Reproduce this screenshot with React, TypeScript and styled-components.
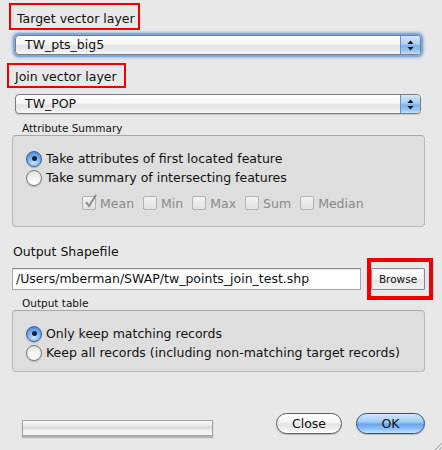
import React from 'react';
import styled, { createGlobalStyle } from 'styled-components';

const GlobalStyle = createGlobalStyle`
	html, body {
		margin: 0;
		padding: 0;
		background: #e8e8e8;
	}
	body {
		font-family: 'DejaVu Sans', 'Liberation Sans', sans-serif;
		font-size: 12.5px;
		color: #111;
	}
`;

const Dialog = styled.div`
	position: relative;
	width: 442px;
	height: 450px;
	box-sizing: border-box;
	padding: 3px 17px 0 12px;
	display: flex;
	flex-direction: column;
	overflow: hidden;
`;

const MarkedLabel = styled.div<{ $top: number; $left: number; $width: number; $padTop: number }>`
	align-self: flex-start;
	box-sizing: border-box;
	width: ${(p) => p.$width}px;
	margin-top: ${(p) => p.$top}px;
	margin-left: ${(p) => p.$left}px;
	padding: ${(p) => p.$padTop}px 0 2px 6px;
	border: 2px solid #f00000;
	line-height: 15px;
	white-space: nowrap;
`;

const Combo = styled.div<{ $focused?: boolean; $top: number }>`
	margin: ${(p) => p.$top}px 4px 0 3px;
	height: 20px;
	box-sizing: border-box;
	border: 1px solid #7d7d7d;
	border-radius: 4px;
	display: flex;
	overflow: hidden;
	background: linear-gradient(#ffffff 0%, #f6f6f6 45%, #e3e3e3 55%, #ececec 80%, #f8f8f8 100%);
	box-shadow: ${(p) => (p.$focused ? '0 0 1px 2px #7fa8dc, 0 0 3px 3px rgba(120,160,220,0.6)' : '0 1px 1px rgba(0,0,0,0.15)')};
`;

const ComboText = styled.div`
	flex: 1;
	padding-left: 9px;
	line-height: 18px;
	white-space: nowrap;
`;

const ComboArrows = styled.div`
	width: 19px;
	border-left: 1px solid #6f8fb8;
	display: flex;
	align-items: center;
	justify-content: center;
	background: linear-gradient(#d5e7fb 0%, #a9cdf4 45%, #7cb2ec 55%, #9cc9f6 85%, #c5e2fc 100%);
`;

const Caption = styled.div<{ $top: number }>`
	margin: ${(p) => p.$top}px 0 0 10px;
	font-size: 10.5px;
	line-height: 13px;
`;

const Group = styled.div<{ $padTop: number; $padBottom: number }>`
	box-sizing: border-box;
	border: 1px solid #b9b9b9;
	border-top-color: #a9a9a9;
	border-radius: 4px;
	background: #dedede;
	padding: ${(p) => p.$padTop}px 0 ${(p) => p.$padBottom}px 13px;
	display: flex;
	flex-direction: column;
`;

const RadioRow = styled.label`
	display: flex;
	align-items: center;
	height: 19px;
	gap: 4px;
	white-space: nowrap;
`;

const RadioDot = styled.span<{ $on?: boolean }>`
	width: 16px;
	height: 16px;
	box-sizing: border-box;
	border-radius: 50%;
	border: 1px solid ${(p) => (p.$on ? '#3d5f90' : '#7a7a7a')};
	display: flex;
	align-items: center;
	justify-content: center;
	background: ${(p) =>
		p.$on
			? 'radial-gradient(circle at 50% 75%, #c6e6ff 0%, #7fb5ee 45%, #4f8bd8 80%)'
			: 'radial-gradient(circle at 50% 80%, #ffffff 0%, #f1f1f1 50%, #d2d2d2 100%)'};
	box-shadow: 0 1px 1px rgba(0, 0, 0, 0.2);
	&::after {
		content: '';
		display: ${(p) => (p.$on ? 'block' : 'none')};
		width: 5px;
		height: 5px;
		border-radius: 50%;
		background: #15233a;
	}
`;

const CheckRow = styled.div`
	display: flex;
	align-items: center;
	height: 18px;
	margin-top: 7px;
	padding-left: 56px;
	gap: 9px;
	color: #8a8a8a;
`;

const CheckItem = styled.span`
	display: flex;
	align-items: center;
	gap: 4px;
`;

const CheckBox = styled.span`
	position: relative;
	width: 14px;
	height: 14px;
	box-sizing: border-box;
	border: 1px solid #b3b3b3;
	border-radius: 2px;
	background: linear-gradient(#f2f2f2, #e2e2e2);
	svg {
		position: absolute;
		left: 1px;
		top: -3px;
	}
`;

const FieldLabel = styled.div`
	margin: 17px 0 0 1px;
	line-height: 15px;
`;

const FieldRow = styled.div`
	display: flex;
	align-items: center;
	gap: 10px;
	margin-top: 9px;
`;

const PathInput = styled.div`
	width: 349px;
	height: 22px;
	box-sizing: border-box;
	background: #fff;
	border: 1px solid #a6a6a6;
	border-top-color: #8e8e8e;
	box-shadow: inset 0 1px 1px rgba(0, 0, 0, 0.12);
	padding-left: 3px;
	line-height: 20px;
	white-space: nowrap;
	overflow: hidden;
`;

const SquareButton = styled.button<{ $marked?: boolean }>`
	position: relative;
	width: 54px;
	height: 22px;
	box-sizing: border-box;
	margin: 0;
	padding: 0;
	border: 1px solid #8a8a8a;
	border-radius: 1px;
	background: linear-gradient(#ffffff 0%, #f4f4f4 50%, #e6e6e6 55%, #f2f2f2 100%);
	box-shadow: inset 0 0 0 1px #ececec;
	font-family: inherit;
	font-size: 10.5px;
	color: #111;
	&::after {
		content: '';
		display: ${(p) => (p.$marked ? 'block' : 'none')};
		position: absolute;
		top: -11px;
		bottom: -11px;
		left: -5px;
		right: -9px;
		border: 4px solid #f00000;
	}
`;

const Footer = styled.div`
	display: flex;
	align-items: flex-start;
	margin-top: 41px;
`;

const Progress = styled.div`
	margin: 7px 0 0 10px;
	width: 191px;
	height: 16px;
	box-sizing: border-box;
	border: 1px solid #a2a2a2;
	background: linear-gradient(#fafafa 0%, #ececec 30%, #dadada 45%, #f1f1f1 70%, #f8f8f8 100%);
	box-shadow: 0 2px 1px rgba(0, 0, 0, 0.22);
`;

const Spacer = styled.div`
	flex: 1;
`;

const PillButton = styled.button<{ $primary?: boolean; $width: number }>`
	width: ${(p) => p.$width}px;
	height: 21px;
	margin: 0 0 0 14px;
	padding: 0;
	border-radius: 11px;
	border: 1px solid ${(p) => (p.$primary ? '#2f4f86' : '#5a5a5a')};
	background: ${(p) =>
		p.$primary
			? 'linear-gradient(#d0e6fb 0%, #a4cdf6 40%, #6ca6ea 55%, #8fc3f6 80%, #c6e4fd 100%)'
			: 'linear-gradient(#ffffff 0%, #f6f6f6 40%, #e4e4e4 55%, #f0f0f0 80%, #ffffff 100%)'};
	box-shadow: 0 1px 1px rgba(0, 0, 0, 0.2);
	font-family: inherit;
	font-size: 12.5px;
	color: #111;
`;

const Grip = styled.svg`
	position: absolute;
	right: 0;
	bottom: 0;
`;

function Arrows() {
	return (
		<svg width="7" height="11" viewBox="0 0 7 11">
			<path d="M3.5 0.5 L6.5 4 L0.5 4 Z" fill="#111" />
			<path d="M0.5 7 L6.5 7 L3.5 10.5 Z" fill="#111" />
		</svg>
	);
}

function Check({ label, checked }: { label: string; checked?: boolean }) {
	return (
		<CheckItem>
			<CheckBox>
				{checked && (
					<svg width="14" height="15" viewBox="0 0 14 15">
						<path d="M2 8 L5 12 L12 1" fill="none" stroke="#8c8c8c" strokeWidth="2" />
					</svg>
				)}
			</CheckBox>
			{label}
		</CheckItem>
	);
}

export default function App() {
	return (
		<>
			<GlobalStyle />
			<Dialog>
				<MarkedLabel $top={0} $left={-3} $width={131} $padTop={6}>
					Target vector layer
				</MarkedLabel>
				<Combo $focused $top={5}>
					<ComboText>TW_pts_big5</ComboText>
					<ComboArrows>
						<Arrows />
					</ComboArrows>
				</Combo>
				<MarkedLabel $top={8} $left={-5} $width={119} $padTop={4}>
					Join vector layer
				</MarkedLabel>
				<Combo $top={6}>
					<ComboText>TW_POP</ComboText>
					<ComboArrows>
						<Arrows />
					</ComboArrows>
				</Combo>

				<Caption $top={8}>Attribute Summary</Caption>
				<Group $padTop={13} $padBottom={14}>
					<RadioRow>
						<RadioDot $on />
						Take attributes of first located feature
					</RadioRow>
					<RadioRow>
						<RadioDot />
						Take summary of intersecting features
					</RadioRow>
					<CheckRow>
						<Check label="Mean" checked />
						<Check label="Min" />
						<Check label="Max" />
						<Check label="Sum" />
						<Check label="Median" />
					</CheckRow>
				</Group>

				<FieldLabel>Output Shapefile</FieldLabel>
				<FieldRow>
					<PathInput>/Users/mberman/SWAP/tw_points_join_test.shp</PathInput>
					<SquareButton $marked>Browse</SquareButton>
				</FieldRow>

				<Caption $top={7}>Output table</Caption>
				<Group $padTop={13} $padBottom={9}>
					<RadioRow>
						<RadioDot $on />
						Only keep matching records
					</RadioRow>
					<RadioRow>
						<RadioDot />
						Keep all records (including non-matching target records)
					</RadioRow>
				</Group>

				<Footer>
					<Progress />
					<Spacer />
					<PillButton $width={66}>Close</PillButton>
					<PillButton $primary $width={69}>OK</PillButton>
				</Footer>
				<Grip width="10" height="10" viewBox="0 0 10 10">
					<line x1="3" y1="10" x2="10" y2="3" stroke="#9a9a9a" strokeWidth="1" />
					<line x1="7" y1="10" x2="10" y2="7" stroke="#9a9a9a" strokeWidth="1" />
				</Grip>
			</Dialog>
		</>
	);
}
